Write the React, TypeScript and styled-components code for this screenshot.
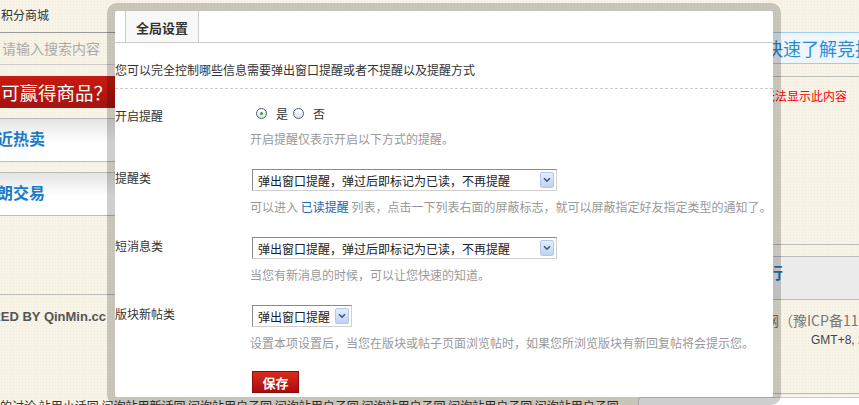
import React, { useState } from 'react'
import styled, { createGlobalStyle } from 'styled-components'

const GlobalStyle = createGlobalStyle`
  html, body {
    margin: 0;
    padding: 0;
  }
  body {
    width: 859px;
    height: 405px;
    overflow: hidden;
    background-color: #f7f3e7;
    background-image: radial-gradient(rgba(190, 170, 120, 0.12) 1px, transparent 1px);
    background-size: 3px 3px;
    font-family: "Noto Sans CJK SC", "Noto Sans", "Liberation Sans", sans-serif;
    font-size: 12px;
    color: #333;
  }
`

// 셀렉트 옵션
const notifyOptions = ['弹出窗口提醒，弹过后即标记为已读，不再提醒', '弹出窗口提醒', '不提醒']

export default function App() {
  // 라디오 상태
  const [enabled, setEnabled] = useState(true)

  return (
    <>
      <GlobalStyle />
      <Page>
        <Upper>
          {/* 뒤쪽 페이지 왼쪽 영역 */}
          <LeftCol>
            <TopLink>积分商城</TopLink>
            <SearchBox>请输入搜索内容</SearchBox>
            <PromoBanner>可赢得商品？</PromoBanner>
            <HotBox>近热卖</HotBox>
            <HotBox>朗交易</HotBox>
            <PoweredBy>
              <span>POWERED BY QinMin.cc</span>
            </PoweredBy>
          </LeftCol>

          <Middle />

          {/* 뒤쪽 페이지 오른쪽 영역 */}
          <RightCol>
            <QuickBox>快速了解竞拍</QuickBox>
            <Rule $top={12} />
            <ErrorText>无法显示此内容</ErrorText>
            <Rule $top={138} />
            <GreyBox>
              <span>排行</span>
            </GreyBox>
            <IcpText>网（豫ICP备11012345号）</IcpText>
            <TimeText>GMT+8, 2024-5-1 12:30</TimeText>
            <BottomRule />
          </RightCol>
        </Upper>

        <Footer>
          <FooterText>的讨论 站用小话回 问询站用新话回 问询站用户子回 问询站用户子回 问询站用户子回 问询站用户子回 问询站用户子回</FooterText>
          <FooterBox />
        </Footer>

        {/* 설정 다이얼로그 */}
        <Dialog>
          <TabBar>
            <Tab>全局设置</Tab>
          </TabBar>
          <Intro>您可以完全控制哪些信息需要弹出窗口提醒或者不提醒以及提醒方式</Intro>

          <Form>
            <Row>
              <Label $offset={4}>开启提醒</Label>
              <Field>
                <RadioLine>
                  <RadioItem onClick={() => setEnabled(true)}>
                    <Radio $checked={enabled} />
                    是
                  </RadioItem>
                  <RadioItem onClick={() => setEnabled(false)}>
                    <Radio $checked={!enabled} />
                    否
                  </RadioItem>
                </RadioLine>
                <Hint>开启提醒仅表示开启以下方式的提醒。</Hint>
              </Field>
            </Row>

            <Row>
              <Label>提醒类</Label>
              <Field>
                <SelectBox $width={305} value={notifyOptions[0]} />
                <Hint>
                  可以进入 <HintLink>已读提醒</HintLink> 列表，点击一下列表右面的屏蔽标志，就可以屏蔽指定好友指定类型的通知了。
                </Hint>
              </Field>
            </Row>

            <Row>
              <Label>短消息类</Label>
              <Field>
                <SelectBox $width={305} value={notifyOptions[0]} />
                <Hint>当您有新消息的时候，可以让您快速的知道。</Hint>
              </Field>
            </Row>

            <Row>
              <Label>版块新帖类</Label>
              <Field>
                <SelectBox $width={100} value={notifyOptions[1]} />
                <Hint>设置本项设置后，当您在版块或帖子页面浏览帖时，如果您所浏览版块有新回复帖将会提示您。</Hint>
              </Field>
            </Row>

            <ButtonRow>
              <SaveButton type="button">保存</SaveButton>
            </ButtonRow>
          </Form>
        </Dialog>
      </Page>
    </>
  )
}

const SelectBox = ({ $width, value }: { $width: number; value: string }) => (
  <Select $width={$width}>
    <SelectText>{value}</SelectText>
    <SelectArrow>
      <svg width="8" height="6" viewBox="0 0 8 6">
        <path d="M1 1.2 L4 4.2 L7 1.2" fill="none" stroke="#3f5680" strokeWidth="1.6" />
      </svg>
    </SelectArrow>
  </Select>
)

const Page = styled.div`
  position: relative;
  width: 859px;
  height: 405px;
  overflow: hidden;
  display: flex;
  flex-direction: column;
`

const Upper = styled.div`
  display: flex;
  height: 397px;
`

const LeftCol = styled.div`
  width: 115px;
  flex-shrink: 0;
  display: flex;
  flex-direction: column;
  overflow: hidden;
`

const TopLink = styled.div`
  height: 32px;
  line-height: 30px;
  padding-left: 1px;
  font-size: 12px;
  color: #333;
  border-bottom: 1px solid #999;
  white-space: nowrap;
`

const SearchBox = styled.div`
  height: 31px;
  line-height: 31px;
  padding-left: 2px;
  font-size: 14px;
  color: #aaa;
  border-bottom: 1px solid #ccc;
  white-space: nowrap;
`

const PromoBanner = styled.div`
  margin-top: 11px;
  height: 32px;
  line-height: 32px;
  padding-left: 1px;
  font-size: 18.5px;
  color: #fff;
  background: linear-gradient(180deg, #c81a10, #a5140f);
  white-space: nowrap;
`

const HotBox = styled.div`
  margin-top: 10px;
  height: 44px;
  box-sizing: border-box;
  padding-top: 8px;
  line-height: 22px;
  text-indent: -3px;
  font-size: 16px;
  font-weight: bold;
  color: #1b7cc6;
  border-top: 1px solid #bbb;
  border-bottom: 1px solid #bbb;
  background: linear-gradient(180deg, #e4e4e4 0%, #ffffff 55%, #ffffff 100%);
  white-space: nowrap;
  &:first-of-type {
    height: 46px;
  }
`

const PoweredBy = styled.div`
  margin-top: 78px;
  border-top: 1px solid #bbb;
  padding-top: 12px;
  line-height: 20px;
  display: flex;
  justify-content: flex-end;
  padding-right: 9px;
  overflow: hidden;
  font-family: "Liberation Sans", sans-serif;
  font-size: 13px;
  font-weight: bold;
  color: #555;
  white-space: nowrap;
  span {
    flex-shrink: 0;
  }
`

const Middle = styled.div`
  flex: 1;
`

const RightCol = styled.div`
  width: 99px;
  flex-shrink: 0;
  display: flex;
  flex-direction: column;
  overflow: hidden;
`

const QuickBox = styled.div`
  margin-top: 32px;
  height: 30px;
  line-height: 30px;
  padding-left: 5px;
  font-size: 18px;
  color: #2a8dd3;
  background: #eef6fc;
  border-top: 1px solid #9ccdee;
  border-bottom: 1px solid #9ccdee;
  white-space: nowrap;
`

const Rule = styled.div<{ $top: number }>`
  margin-top: ${(p) => p.$top}px;
  border-top: 1px solid #bbb;
`

const ErrorText = styled.div`
  margin-top: 9px;
  line-height: 20px;
  padding-left: 3px;
  font-size: 12px;
  color: #f00;
  white-space: nowrap;
`

const GreyBox = styled.div`
  margin-top: 11px;
  border-top: 1px solid #bbb;
  border-bottom: 1px solid #bbb;
  height: 44px;
  padding-top: 5px;
  box-sizing: border-box;
  background: #ececec;
  line-height: 20px;
  font-size: 16px;
  font-weight: bold;
  color: #1b7cc6;
  white-space: nowrap;
  span {
    margin-left: -9px;
  }
`

const IcpText = styled.div`
  margin-top: 10px;
  line-height: 20px;
  padding-left: 5px;
  font-size: 14px;
  color: #777;
  white-space: nowrap;
`

const TimeText = styled.div`
  margin-top: 1px;
  line-height: 18px;
  padding-left: 51px;
  font-family: "Liberation Sans", sans-serif;
  font-size: 12px;
  color: #444;
  white-space: nowrap;
`

const BottomRule = styled.div`
  margin-top: auto;
  margin-bottom: 3px;
  border-top: 1px solid #bbb;
`

const Footer = styled.div`
  display: flex;
  height: 8px;
`

const FooterText = styled.div`
  width: 638px;
  flex-shrink: 0;
  overflow: hidden;
  white-space: nowrap;
  line-height: 16px;
  font-size: 12px;
  color: #333;
  padding-top: 1px;
`

const FooterBox = styled.div`
  flex: 1;
  background: #fff;
  border-top: 1px solid #ccc;
  border-left: 1px solid #ccc;
  border-top-left-radius: 3px;
`

const Dialog = styled.div`
  position: absolute;
  left: 107px;
  top: 3px;
  width: 658px;
  height: 386px;
  border: 8px solid rgba(0, 0, 0, 0.19);
  border-radius: 10px;
  background: #fff;
  background-clip: padding-box;
  display: flex;
  flex-direction: column;
`

const TabBar = styled.div`
  height: 31px;
  border-bottom: 1px solid #ccc;
  padding-left: 10px;
  display: flex;
`

const Tab = styled.div`
  width: 72px;
  height: 31px;
  line-height: 33px;
  text-align: center;
  border-left: 1px solid #ccc;
  border-right: 1px solid #ccc;
  background: #f8f8f8;
  font-size: 13px;
  font-weight: bold;
  color: #333;
`

const Intro = styled.div`
  padding-top: 18px;
  padding-bottom: 9px;
  line-height: 18px;
  font-size: 12px;
  color: #333;
  border-bottom: 1px dashed #ccc;
  white-space: nowrap;
`

const Form = styled.div`
  padding-top: 14px;
  display: flex;
  flex-direction: column;
`

const Row = styled.div`
  display: grid;
  grid-template-columns: 135px 1fr;
  & + & {
    margin-top: 21px;
  }
`

const Label = styled.div<{ $offset?: number }>`
  padding-top: ${(p) => p.$offset ?? 0}px;
  line-height: 18px;
  font-size: 12px;
  color: #333;
`

const Field = styled.div`
  display: flex;
  flex-direction: column;
  align-items: flex-start;
`

const RadioLine = styled.div`
  height: 20px;
  display: flex;
  align-items: center;
  gap: 5px;
  padding-left: 6px;
`

const RadioItem = styled.label`
  display: flex;
  align-items: center;
  gap: 9px;
  font-size: 12px;
  color: #333;
  cursor: pointer;
`

const Radio = styled.span<{ $checked: boolean }>`
  position: relative;
  width: 9px;
  height: 9px;
  border: 1px solid #4b5f7e;
  border-radius: 50%;
  background: linear-gradient(180deg, #ffffff, #dde3ea);
  &::after {
    content: '';
    position: absolute;
    left: 3px;
    top: 3px;
    width: 3px;
    height: 3px;
    border-radius: 50%;
    background: #2ea52e;
    display: ${(p) => (p.$checked ? 'block' : 'none')};
  }
`

const Hint = styled.div`
  margin-top: 7px;
  line-height: 18px;
  font-size: 12px;
  color: #999;
  white-space: nowrap;
`

const HintLink = styled.a`
  color: #2366a8;
  text-decoration: none;
`

const Select = styled.div<{ $width: number }>`
  position: relative;
  margin-left: 2px;
  width: ${(p) => p.$width}px;
  height: 22px;
  box-sizing: border-box;
  border: 1px solid;
  border-color: #8a8a8a #d0d0d0 #d0d0d0 #8a8a8a;
  background: #fff;
  display: flex;
  align-items: center;
`

const SelectText = styled.span`
  padding-left: 5px;
  font-size: 12px;
  color: #222;
  white-space: nowrap;
`

const SelectArrow = styled.span`
  position: absolute;
  right: 2px;
  top: 2px;
  width: 14px;
  height: 16px;
  box-sizing: border-box;
  border: 1px solid #b3c6ec;
  border-radius: 2px;
  background: linear-gradient(180deg, #e6eefc, #bfd1f4);
  display: flex;
  align-items: center;
  justify-content: center;
`

const ButtonRow = styled.div`
  margin-top: 19px;
  padding-left: 137px;
`

const SaveButton = styled.button`
  width: 47px;
  height: 22px;
  padding: 0;
  border: 1px solid #8c0c0c;
  background: linear-gradient(180deg, #dc2a20, #a90c0c);
  color: #fff;
  font-family: "Noto Sans CJK SC", sans-serif;
  font-size: 13px;
  font-weight: bold;
  cursor: pointer;
`
